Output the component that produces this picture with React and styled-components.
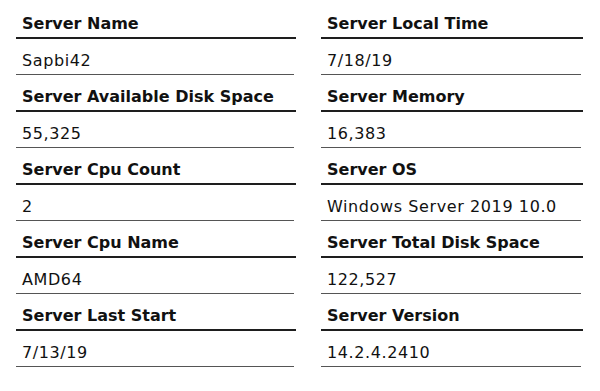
import React from 'react';
import styled, { createGlobalStyle } from 'styled-components';

const GlobalStyle = createGlobalStyle`
    * { box-sizing: border-box; }
    body {
        margin: 0;
        background: #fff;
        font-family: "DejaVu Sans", "Liberation Sans", sans-serif;
        color: #111;
    }
`;

const Grid = styled.div`
    display: grid;
    grid-template-columns: 280px 262px;
    column-gap: 25px;
    padding: 2px 0 0 16px;
`;

const Field = styled.div`
    display: flex;
    flex-direction: column;
`;

const Label = styled.div`
    height: 37px;
    display: flex;
    align-items: flex-end;
    padding: 0 0 3px 6px;
    font-size: 16px;
    font-weight: 700;
    line-height: 20px;
    border-bottom: 2px solid #1e1e1e;
    white-space: nowrap;
`;

const Value = styled.div`
    height: 36px;
    display: flex;
    align-items: flex-end;
    padding: 0 0 3px 6px;
    margin-right: 2px;
    font-size: 16px;
    line-height: 20px;
    letter-spacing: 0.6px;
    border-bottom: 1px solid #555;
    white-space: nowrap;
`;

const fields = [
    ['Server Name', 'Sapbi42'],
    ['Server Local Time', '7/18/19'],
    ['Server Available Disk Space', '55,325'],
    ['Server Memory', '16,383'],
    ['Server Cpu Count', '2'],
    ['Server OS', 'Windows Server 2019 10.0'],
    ['Server Cpu Name', 'AMD64'],
    ['Server Total Disk Space', '122,527'],
    ['Server Last Start', '7/13/19'],
    ['Server Version', '14.2.4.2410'],
];

const App = () => {
    return (
        <>
            <GlobalStyle />
            <Grid>
                {fields.map(([label, value]) => (
                    <Field key={label}>
                        <Label>{label}</Label>
                        <Value>{value}</Value>
                    </Field>
                ))}
            </Grid>
        </>
    )
}

export default App;
